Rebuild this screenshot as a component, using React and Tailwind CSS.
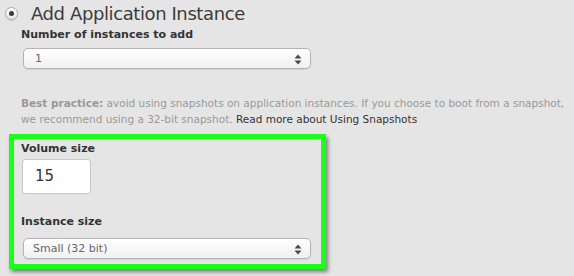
export default function App() {
  const font = { fontFamily: '"DejaVu Sans", "Lucida Grande", sans-serif' };
  const Arrows = () => (
    <svg width="8" height="11" viewBox="0 0 8 11" className="absolute right-[8px] top-[5px]">
      <path d="M4 0.5 L7.5 4.5 L0.5 4.5 Z" fill="#4a4a4a" />
      <path d="M4 10.5 L7.5 6.5 L0.5 6.5 Z" fill="#4a4a4a" />
    </svg>
  );
  return (
    <div className="w-[574px] h-[276px] bg-[#e5e5e5] overflow-hidden relative" style={font}>
      <div className="flex items-center pt-[3px] pl-[5px] h-[24px]">
        <div className="w-[13px] h-[13px] rounded-full border border-[#a9a9a9] bg-gradient-to-b from-[#ffffff] to-[#e8e8e8] flex items-center justify-center shadow-[0_1px_1px_rgba(0,0,0,0.1)]">
          <div className="w-[5px] h-[5px] rounded-full bg-[#3a3a3a]" />
        </div>
        <div className="ml-[13px] text-[18px] leading-[24px] text-[#3c3c3c] tracking-[-0.4px]">Add Application Instance</div>
      </div>
      <div className="pl-[21px]">
        <div className="mt-[4px] text-[11px] leading-[14px] font-bold text-[#333]">Number of instances to add</div>
        <div className="relative ml-[2px] mt-[6px] w-[288px] h-[21px] rounded-[5px] border border-[#b3b3b3] bg-gradient-to-b from-[#ffffff] to-[#f0f0f0] shadow-[0_1px_1px_rgba(0,0,0,0.08)]">
          <span className="absolute left-[11px] top-[3px] text-[11px] leading-[14px] text-[#666]">1</span>
          <Arrows />
        </div>
        <p className="mt-[26px] text-[10.5px] leading-[16px] text-[#999] w-[552px]">
          <b className="font-bold">Best practice:</b> avoid using snapshots on application instances. If you choose to boot from a snapshot, we recommend using a 32-bit snapshot. <a className="text-[#333]">Read more about Using Snapshots</a>
        </p>
      </div>
      <div className="ml-[9px] mt-[7px] w-[317px] h-[135px] border-[5px] border-[#18ff18] shadow-[2px_3px_4px_rgba(0,0,0,0.45)] pl-[7px] pt-[3px]">
        <div className="text-[11px] leading-[14px] font-bold text-[#333]">Volume size</div>
        <div className="mt-[3px] ml-[1px] w-[69px] h-[35px] bg-white border border-[#c8c8c8] rounded-[3px] flex items-center pl-[12px] text-[15px] text-[#333]">15</div>
        <div className="mt-[21px] text-[11px] leading-[14px] font-bold text-[#333]">Instance size</div>
        <div className="relative ml-[2px] mt-[9px] w-[288px] h-[21px] rounded-[5px] border border-[#b3b3b3] bg-gradient-to-b from-[#ffffff] to-[#f0f0f0] shadow-[0_1px_1px_rgba(0,0,0,0.08)]">
          <span className="absolute left-[9px] top-[3px] text-[11px] leading-[14px] text-[#666]">Small (32 bit)</span>
          <Arrows />
        </div>
      </div>
    </div>
  );
}
